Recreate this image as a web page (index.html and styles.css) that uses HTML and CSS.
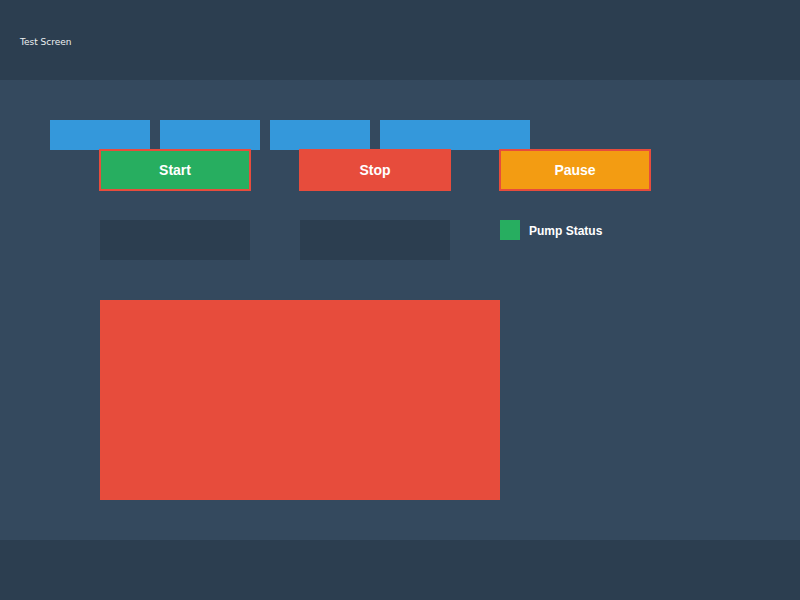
FILE: index.html
```html
<!DOCTYPE html>
<html>
<head>
<meta charset="utf-8">
<link rel="stylesheet" href="styles.css">
</head>
<body>
<div class="screen">
  <header class="header"><span class="title">Test Screen</span></header>
  <main class="main">
    <div class="tabs">
      <div class="tab"></div>
      <div class="tab"></div>
      <div class="tab"></div>
      <div class="tab wide"></div>
    </div>
    <div class="grid">
      <div class="btn start">Start</div>
      <div class="btn stop">Stop</div>
      <div class="btn pause">Pause</div>
      <div class="field"></div>
      <div class="field"></div>
      <div class="status"><span class="led"></span><span class="status-label">Pump Status</span></div>
    </div>
    <div class="panel"></div>
  </main>
  <footer class="footer"></footer>
</div>
</body>
</html>
```
FILE: styles.css
```css
html, body {
  margin: 0;
  padding: 0;
}
body {
  width: 800px;
  height: 600px;
  overflow: hidden;
  font-family: "Liberation Sans", Arial, sans-serif;
  color: #ffffff;
}
.screen {
  display: flex;
  flex-direction: column;
  width: 800px;
  height: 600px;
}
.header {
  height: 80px;
  background: #2c3e50;
  display: flex;
  align-items: center;
  padding-left: 20px;
  box-sizing: border-box;
}
.title {
  font-family: "DejaVu Sans", sans-serif;
  font-size: 9px;
  color: #ecf0f1;
  margin-top: 3px;
}
.main {
  height: 460px;
  background: #34495e;
  box-sizing: border-box;
  padding: 40px 0 0 50px;
}
.tabs {
  display: flex;
  gap: 10px;
  height: 30px;
}
.tab {
  width: 100px;
  height: 30px;
  background: #3498db;
}
.tab.wide {
  width: 150px;
}
.grid {
  margin-left: 50px;
  display: grid;
  grid-template-columns: 150px 150px 150px;
  column-gap: 50px;
  row-gap: 30px;
  grid-template-rows: 40px 40px;
}
.btn {
  box-sizing: border-box;
  width: 152px;
  height: 42px;
  margin: -1px 0 0 -1px;
  border: 2px solid #e74c3c;
  display: flex;
  align-items: center;
  justify-content: center;
  font-weight: bold;
  font-size: 14px;
  color: #ffffff;
}
.start { background: #27ae60; }
.stop { background: #e74c3c; }
.pause { background: #f39c12; }
.field {
  background: #2c3e50;
}
.status {
  display: flex;
  align-items: flex-start;
  gap: 9px;
}
.led {
  width: 20px;
  height: 20px;
  background: #27ae60;
  flex: none;
}
.status-label {
  font-size: 12px;
  font-weight: bold;
  line-height: 20px;
  padding-top: 1px;
}
.panel {
  margin: 40px 0 0 50px;
  width: 400px;
  height: 200px;
  background: #e74c3c;
}
.footer {
  height: 60px;
  background: #2c3e50;
}
```
